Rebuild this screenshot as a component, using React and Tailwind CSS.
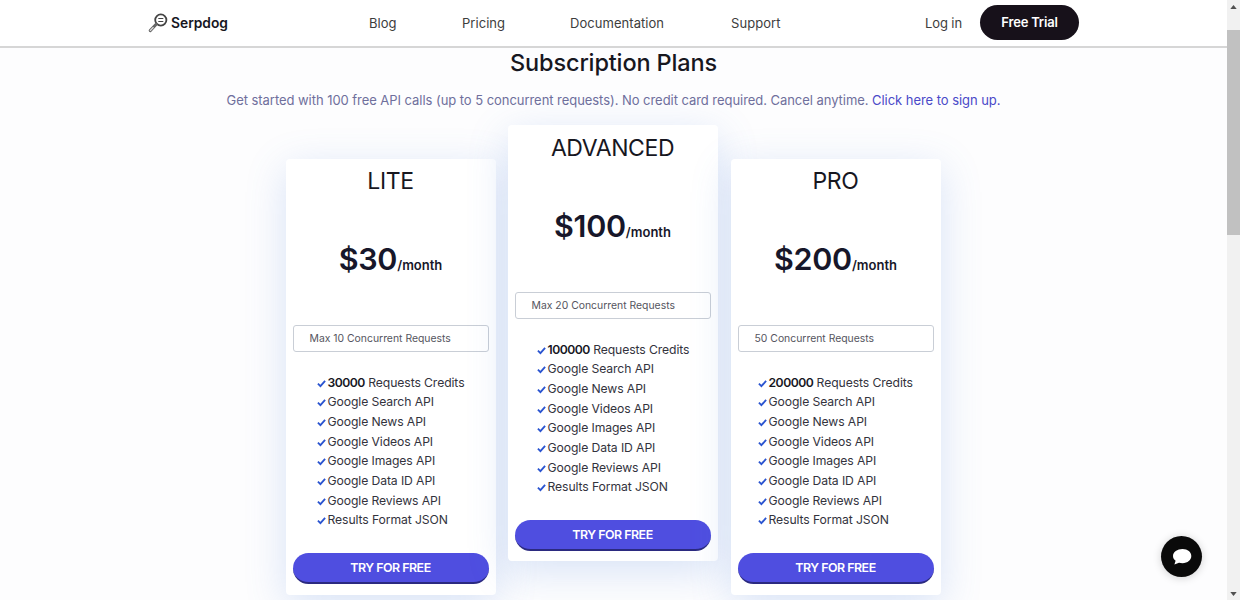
const font = { fontFamily: 'Inter, "Liberation Sans", sans-serif' };

const APIS = [
  "Google Search API",
  "Google News API",
  "Google Videos API",
  "Google Images API",
  "Google Data ID API",
  "Google Reviews API",
  "Results Format JSON",
];

function Check() {
  return (
    <svg viewBox="0 0 10 10" className="w-[9px] h-[9px] shrink-0 mt-[5px]" fill="none">
      <path d="M1 5.2 L3.8 8 L9 2" stroke="#2a54d0" strokeWidth="2" />
    </svg>
  );
}

function Logo() {
  return (
    <svg viewBox="0 0 20 20" className="w-[20px] h-[20px]" fill="none">
      <circle cx="12.8" cy="7" r="5.6" stroke="#444" strokeWidth="1.8" />
      <path d="M10.300 5.500h5M10.300 8.500h5" stroke="#444" strokeWidth="1.100" />
      <path d="M8.200 11.200 L2.200 17.600" stroke="#666" strokeWidth="3" strokeLinecap="round" />
      <path d="M5.200 14.500 L2.300 17.500" stroke="#ddd" strokeWidth="1.100" strokeLinecap="round" />
    </svg>
  );
}

function Card({ name, price, limit, credits, offset, listIndent }) {
  return (
    <div className={`w-[210px] h-[436px] bg-white rounded-[4px] shadow-[0_10px_40px_rgba(80,130,220,0.22)] flex flex-col px-[7px] ${offset}`}>
      <div className="text-center text-[23px] leading-[28px] mt-[8px] text-[#17171f] tracking-[-0.4px]">{name}</div>
      <div className="flex justify-center items-baseline h-[40px] mt-[44px] text-[#17172a]">
        <span className="text-[30.5px] leading-[40px] font-semibold tracking-[-0.3px]">${price}</span>
        <span className="text-[13px] font-semibold">/month</span>
      </div>
      <div className="mt-[46px] h-[27px] border border-[#c9ced6] rounded-[3px] flex items-center text-[10.4px] text-[#555560] pl-[16px]">
        {limit}
      </div>
      <ul className={`mt-[21.5px] flex flex-col gap-[2.7px] text-[12.2px] leading-[17px] text-[#33333d] tracking-[-0.1px] h-[168px] ${listIndent}`}>
        <li className="flex gap-[2px] items-start">
          <Check />
          <span><span className="font-semibold text-[#17171f] tracking-[-0.5px]">{credits}</span> Requests Credits</span>
        </li>
        {APIS.map((a) => (
          <li key={a} className="flex gap-[2px] items-start">
            <Check />
            <span>{a}</span>
          </li>
        ))}
      </ul>
      <button className="mt-[11.5px] h-[31px] pt-[2px] rounded-full bg-[#4f4ee0] border-b-2 border-[#2b2a80] text-white text-[12.4px] font-semibold tracking-[-0.5px]">
        TRY FOR FREE
      </button>
    </div>
  );
}

export default function App() {
  return (
    <div style={font} className="w-full h-[600px] overflow-hidden flex bg-[#fdfdfe] relative">
      <div className="flex-1 min-w-0 flex flex-col">
        <header className="h-[48px] shrink-0 bg-white border-b-2 border-[#d6d6d6] flex items-center pl-[148px] pr-[148px] text-[13px] text-[#3d3d3d]">
          <div className="flex items-center gap-[3px] w-[221px]">
            <Logo />
            <span className="text-[13.8px] font-semibold text-[#17171f] mt-[1px]">Serpdog</span>
          </div>
          <nav className="flex items-center text-[13px] tracking-[0.05px] mt-[1px]">
            <span className="w-[93px]">Blog</span>
            <span className="w-[108px]">Pricing</span>
            <span className="w-[161px]">Documentation</span>
            <span>Support</span>
          </nav>
          <div className="ml-auto flex items-center gap-[18px]">
            <span className="tracking-[-0.1px] mt-[1px]">Log in</span>
            <span className="h-[35px] w-[99px] -mt-[1px] rounded-full bg-[#17111a] text-white font-semibold text-[13px] tracking-[-0.2px] flex items-center justify-center">
              Free Trial
            </span>
          </div>
        </header>
        <h1 className="text-center text-[23.5px] leading-[30px] text-[#17171f] font-medium tracking-[-0.15px]">Subscription Plans</h1>
        <p className="text-center text-[13px] leading-[20px] mt-[12px] text-[#6f6f9c] tracking-[-0.05px]">
          Get started with 100 free API calls (up to 5 concurrent requests). No credit card required. Cancel anytime.{" "}
          <span className="text-[#4a49c8]">Click here to sign up.</span>
        </p>
        <div className="flex justify-center gap-[12px] mt-[49px] pr-[1px]">
          <Card name="LITE" price="30" limit="Max 10 Concurrent Requests" credits="30000" listIndent="pl-[24px]" offset="" />
          <Card name="ADVANCED" price="100" limit="Max 20 Concurrent Requests" credits="100000" listIndent="pl-[22px]" offset="-mt-[34px] pt-[1px]" />
          <Card name="PRO" price="200" limit="50 Concurrent Requests" credits="200000" listIndent="pl-[20px]" offset="ml-[1px]" />
        </div>
      </div>
      <aside className="w-[13px] shrink-0 bg-[#f1f1f1] flex flex-col items-center">
        <div className="h-[13px] flex items-center justify-center text-[#505050]">
          <svg viewBox="0 0 8 5" className="w-[7px] h-[4px]"><path d="M4 0 L8 5 H0 Z" fill="currentColor" /></svg>
        </div>
        <div className="mt-[17px] h-[205px] w-full bg-[#c1c1c1]" />
        <div className="mt-auto h-[13px] flex items-center justify-center text-[#505050]">
          <svg viewBox="0 0 8 5" className="w-[7px] h-[4px]"><path d="M4 5 L8 0 H0 Z" fill="currentColor" /></svg>
        </div>
      </aside>
      <div className="absolute left-[1161px] top-[536px] w-[41px] h-[41px] rounded-full bg-[#0a0a0a] shadow-[0_1px_8px_rgba(0,0,0,0.18)] flex items-center justify-center">
        <svg viewBox="0 0 24 24" className="w-[24px] h-[24px]">
          <path d="M12.5 4C7.3 4 3 7 3 11c0 2 1 3.6 2.6 4.8L4.4 19.6l4.6-1.8c1.100.3 2.300.4 3.500.4 5.200 0 8.800-3 8.800-7.100S17.700 4 12.500 4Z" fill="#ffffff" />
        </svg>
      </div>
    </div>
  );
}
